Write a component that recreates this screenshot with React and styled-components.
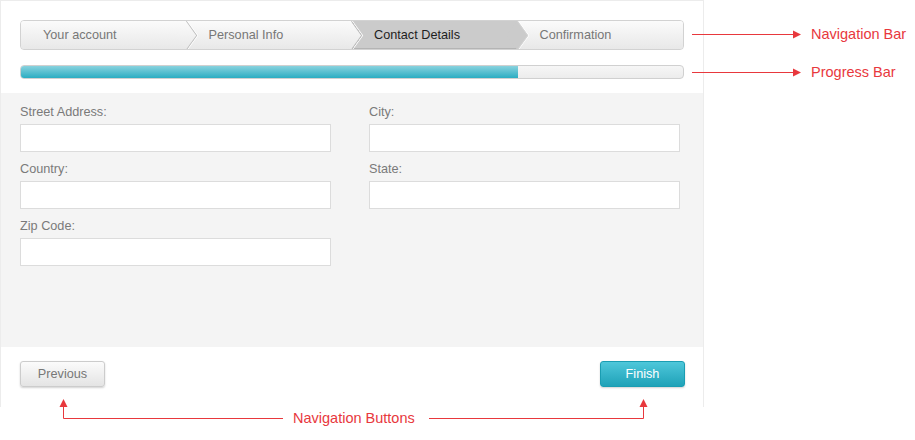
import React from 'react';
import styled, { createGlobalStyle } from 'styled-components';

const steps = ['Your account', 'Personal Info', 'Contact Details', 'Confirmation'];
const activeStep = 2;
const progress = 75;

const fields = ['Street Address:', 'City:', 'Country:', 'State:', 'Zip Code:'];

const RED = '#e8383d';

function App() {
  return (
    <Page>
      <GlobalStyle />
      <Wizard>
        <Head>
          <Nav>
            {steps.map((step, i) => (
              <Step key={step} $active={i === activeStep}>
                {step}
              </Step>
            ))}
          </Nav>
          <Track>
            <Fill style={{ width: `${progress}%` }} />
          </Track>
        </Head>
        <Body>
          <FieldGrid>
            {fields.map((label) => (
              <Field key={label}>
                <Label>{label}</Label>
                <Input type="text" />
              </Field>
            ))}
          </FieldGrid>
        </Body>
        <Footer>
          <Button>Previous</Button>
          <Button $primary>Finish</Button>
        </Footer>
      </Wizard>

      <Callouts width="915" height="440" viewBox="0 0 915 440">
        <g stroke={RED} strokeWidth="1" fill="none">
          <line x1="692" y1="34.5" x2="795" y2="34.5" />
          <line x1="692" y1="72.5" x2="795" y2="72.5" />
          <polyline points="63.5,405 63.5,418.5 283,418.5" />
          <polyline points="429,418.5 643.5,418.5 643.5,405" />
        </g>
        <g fill={RED}>
          <polygon points="801,34.5 793,30.5 793,38.5" />
          <polygon points="801,72.5 793,68.5 793,76.5" />
          <polygon points="63.5,399 59.5,407 67.5,407" />
          <polygon points="643.5,399 639.5,407 647.5,407" />
        </g>
      </Callouts>
      <Note $x={811} $y={25}>Navigation Bar</Note>
      <Note $x={811} $y={63}>Progress Bar</Note>
      <Note $x={293} $y={409}>Navigation Buttons</Note>
    </Page>
  );
}

const GlobalStyle = createGlobalStyle`
  html, body {
    margin: 0;
    padding: 0;
    background: #ffffff;
  }
  body {
    font-family: "Liberation Sans", Arial, sans-serif;
  }
  * {
    box-sizing: border-box;
  }
`;

const Page = styled.div`
  position: relative;
  width: 915px;
  height: 440px;
  overflow: hidden;
`;

const Wizard = styled.div`
  width: 704px;
  border: 1px solid #ececec;
  border-bottom: none;
  background: #ffffff;
`;

const Head = styled.div`
  padding: 19px 19px 14px;
`;

const Nav = styled.ul`
  display: flex;
  margin: 0;
  padding: 0;
  list-style: none;
  height: 30px;
  border: 1px solid #d2d2d2;
  border-radius: 4px;
  overflow: hidden;
  background: linear-gradient(#fbfbfb, #e8e8e8);
`;

const Step = styled.li`
  flex: 1;
  position: relative;
  padding-left: 22px;
  line-height: 28px;
  font-size: 12.7px;
  white-space: nowrap;
  color: ${(p) => (p.$active ? '#1e1e1e' : '#777777')};
  background: ${(p) => (p.$active ? '#cbcbcb' : 'linear-gradient(#fbfbfb, #e8e8e8)')};
  box-shadow: ${(p) => (p.$active ? 'inset 0 -1px 0 #b4b4b4' : 'none')};

  &:not(:last-child)::after {
    content: '';
    position: absolute;
    top: 4px;
    right: -10px;
    width: 20px;
    height: 20px;
    z-index: 1;
    transform: scaleX(0.72) rotate(45deg);
    border-top: 1px solid ${(p) => (p.$active ? '#d4d4d4' : '#bdbdbd')};
    border-right: 1px solid ${(p) => (p.$active ? '#d4d4d4' : '#bdbdbd')};
    box-shadow: 1px -1px 0 #ffffff;
    background: ${(p) =>
      p.$active ? '#cbcbcb' : 'linear-gradient(135deg, #fbfbfb, #e8e8e8)'};
  }
`;

const Track = styled.div`
  margin-top: 15px;
  height: 14px;
  border: 1px solid #d0d0d0;
  border-radius: 4px;
  overflow: hidden;
  background: linear-gradient(#f6f6f6, #ececec);
`;

const Fill = styled.div`
  height: 100%;
  background: linear-gradient(#88d2de, #2badc2);
`;

const Body = styled.div`
  height: 254px;
  padding: 10px 19px;
  background: #f4f4f4;
`;

const FieldGrid = styled.div`
  display: grid;
  grid-template-columns: 311px 311px;
  column-gap: 38px;
  row-gap: 8px;
`;

const Field = styled.div`
  display: flex;
  flex-direction: column;
`;

const Label = styled.label`
  font-size: 12.7px;
  line-height: 18px;
  color: #7a7a7a;
  margin-bottom: 3px;
`;

const Input = styled.input`
  height: 28px;
  width: 100%;
  border: 1px solid #dcdcdc;
  background: #ffffff;
  padding: 0 6px;
  font: inherit;
  outline: none;
`;

const Footer = styled.div`
  height: 60px;
  padding: 14px 18px 0 19px;
  display: flex;
  justify-content: space-between;
  align-items: flex-start;
`;

const Button = styled.button`
  width: 85px;
  height: 26px;
  border-radius: 3px;
  font-family: inherit;
  font-size: 12.7px;
  cursor: pointer;
  border: 1px solid ${(p) => (p.$primary ? '#1a9db2' : '#cccccc')};
  color: ${(p) => (p.$primary ? '#ffffff' : '#777777')};
  background: ${(p) =>
    p.$primary
      ? 'linear-gradient(#4ec7da, #1fa2b8)'
      : 'linear-gradient(#fbfbfb, #e4e4e4)'};
  box-shadow: 0 1px 2px rgba(0, 0, 0, 0.18);
`;

const Callouts = styled.svg`
  position: absolute;
  top: 0;
  left: 0;
  pointer-events: none;
`;

const Note = styled.span`
  position: absolute;
  left: ${(p) => p.$x}px;
  top: ${(p) => p.$y}px;
  font-size: 14.5px;
  line-height: 18px;
  color: ${RED};
  white-space: nowrap;
`;

export default App;
